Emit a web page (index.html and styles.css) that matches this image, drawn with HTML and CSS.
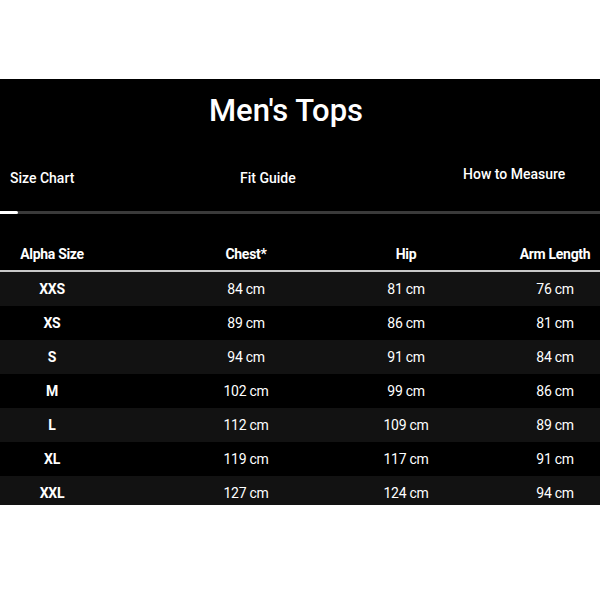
FILE: index.html
```html
<!DOCTYPE html>
<html lang="en">
<head>
<meta charset="utf-8">
<title>Men's Tops</title>
<link rel="stylesheet" href="styles.css">
</head>
<body>
<div class="sheet">
  <h1 class="title">Men's Tops</h1>
  <div class="tabs">
    <div class="tab tab-1">Size Chart</div>
    <div class="tab tab-2">Fit Guide</div>
    <div class="tab tab-3">How to Measure</div>
  </div>
  <div class="track"><div class="thumb"></div></div>
  <div class="table">
    <div class="row head">
      <div class="cell c1">Alpha Size</div>
      <div class="cell c2">Chest*</div>
      <div class="cell c3">Hip</div>
      <div class="cell c4">Arm Length</div>
    </div>
    <div class="row odd">
      <div class="cell c1 size">XXS</div>
      <div class="cell c2">84 cm</div>
      <div class="cell c3">81 cm</div>
      <div class="cell c4">76 cm</div>
    </div>
    <div class="row">
      <div class="cell c1 size">XS</div>
      <div class="cell c2">89 cm</div>
      <div class="cell c3">86 cm</div>
      <div class="cell c4">81 cm</div>
    </div>
    <div class="row odd">
      <div class="cell c1 size">S</div>
      <div class="cell c2">94 cm</div>
      <div class="cell c3">91 cm</div>
      <div class="cell c4">84 cm</div>
    </div>
    <div class="row">
      <div class="cell c1 size">M</div>
      <div class="cell c2">102 cm</div>
      <div class="cell c3">99 cm</div>
      <div class="cell c4">86 cm</div>
    </div>
    <div class="row odd">
      <div class="cell c1 size">L</div>
      <div class="cell c2">112 cm</div>
      <div class="cell c3">109 cm</div>
      <div class="cell c4">89 cm</div>
    </div>
    <div class="row">
      <div class="cell c1 size">XL</div>
      <div class="cell c2">119 cm</div>
      <div class="cell c3">117 cm</div>
      <div class="cell c4">91 cm</div>
    </div>
    <div class="row odd">
      <div class="cell c1 size">XXL</div>
      <div class="cell c2">127 cm</div>
      <div class="cell c3">124 cm</div>
      <div class="cell c4">94 cm</div>
    </div>
  </div>
</div>
</body>
</html>
```

FILE: styles.css
```css
html, body {
  margin: 0;
  padding: 0;
  background: #ffffff;
}

.sheet {
  margin-top: 79px;
  height: 426px;
  overflow: hidden;
  background: #000000;
  color: #ffffff;
  font-family: Roboto, "Liberation Sans", sans-serif;
  font-size: 14px;
  letter-spacing: -0.3px;
}

.title {
  margin: 0;
  padding: 14px 28px 0 0;
  font-size: 31px;
  line-height: 36px;
  font-weight: 500;
  text-align: center;
  letter-spacing: 0;
}

.tabs {
  display: grid;
  grid-template-columns: repeat(3, 1fr);
  align-items: end;
  height: 58px;
  padding-bottom: 24px;
  box-sizing: content-box;
}

.tab {
  line-height: 18px;
  font-weight: 500;
  letter-spacing: 0;
  white-space: nowrap;
}

.tab-1 { padding-left: 10px; }
.tab-2 { padding-left: 40px; }
.tab-3 { padding-left: 63px; padding-bottom: 4px; }

.track {
  height: 3px;
  background: #3a3a3a;
}

.thumb {
  width: 18px;
  height: 3px;
  background: #ffffff;
  border-radius: 0 2px 2px 0;
}

.table {
  margin-top: 23px;
}

.row {
  display: grid;
  grid-template-columns: repeat(4, 1fr);
  height: 34px;
  align-items: center;
}

.row.head {
  height: 33px;
  border-bottom: 2px solid #c8c8c8;
  font-weight: 700;
}

.row.odd {
  background: #121212;
}

.cell {
  text-align: center;
  white-space: nowrap;
}

.c1 { padding-right: 46px; }
.c2 { padding-left: 42px; }
.c3 { padding-left: 62px; }
.c4 { padding-left: 60px; }

.size {
  font-weight: 700;
}
```
